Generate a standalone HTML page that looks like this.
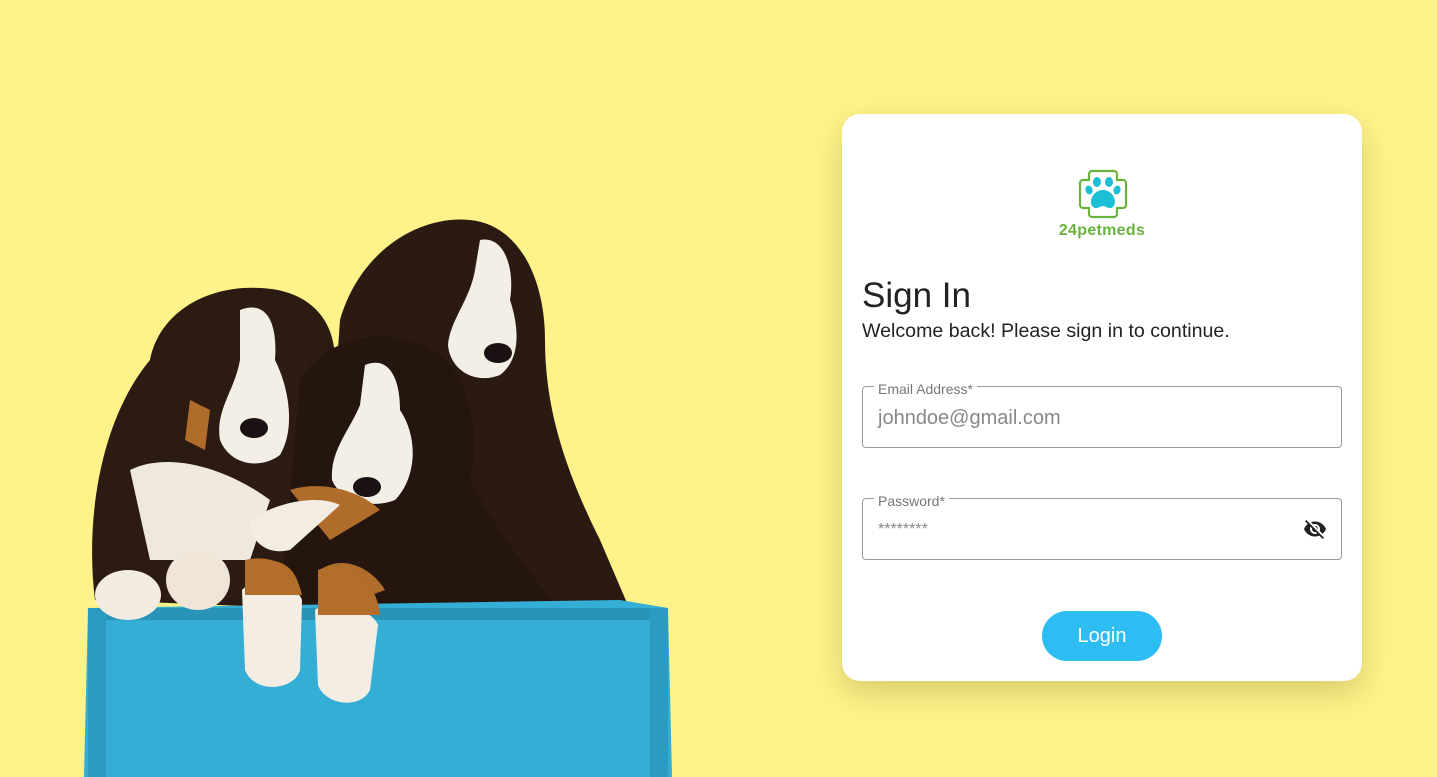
<!DOCTYPE html>
<html><head><meta charset="utf-8"><style>
*{box-sizing:border-box;margin:0;padding:0}
body{width:1437px;height:777px;background:#fef28a;font-family:"Liberation Sans",sans-serif;position:relative;overflow:hidden}
.card{position:absolute;left:842px;top:114px;width:520px;height:567px;background:#fff;border-radius:18px;box-shadow:0 12px 30px rgba(120,110,30,.28)}
h1{position:absolute;left:20px;top:162px;font-size:35px;font-weight:500;color:#222}
.sub{position:absolute;left:20px;top:206px;font-size:19.6px;color:#222}
.field{position:absolute;left:20px;width:480px;height:62px;border:1px solid #999;border-radius:4px}
.lbl{position:absolute;left:11px;top:-5px;background:#fff;padding:0 4px;font-size:14px;color:#777;line-height:14px}
.val{position:absolute;left:15px;top:20px;font-size:20px;color:#888}
.btn{position:absolute;left:200px;top:497px;width:120px;height:50px;border-radius:25px;background:#2ebdf3;color:#fff;font-size:20px;text-align:center;line-height:50px}
.logo{position:absolute;left:200px;top:55px;width:120px;text-align:center}
.logo span{display:block;font-weight:bold;color:#6ab23e;font-size:16px;margin-top:-2px;letter-spacing:0.3px}
</style></head><body>
<svg width="700" height="777" style="position:absolute;left:0;top:0">
<path d="M340,320 C360,250 420,215 470,220 C520,225 545,280 545,340 C545,400 560,460 600,540 L630,610 L320,610 Z" fill="#2a1a12"/>
<path d="M95,600 C85,520 100,420 150,360 C160,310 210,285 260,288 C310,290 335,320 335,360 L340,610 Z" fill="#2c1b12"/>
<path d="M300,380 C330,330 400,325 440,355 C470,380 480,430 470,480 C490,520 520,560 560,610 L280,610 Z" fill="#24160f"/>
<path d="M240,310 C265,300 278,320 275,360 C290,390 295,430 280,455 C260,470 230,465 220,440 C215,410 235,390 240,360 Z" fill="#f4efe6"/>
<path d="M480,240 C505,235 515,270 510,300 C520,330 520,360 500,375 C475,385 450,370 448,345 C450,320 470,300 475,270 Z" fill="#f4efe6"/>
<path d="M365,365 C390,355 400,380 400,410 C420,440 415,480 395,500 C370,510 340,500 332,480 C330,450 350,430 360,405 Z" fill="#f4efe6"/>
<path d="M130,470 C170,450 230,470 270,500 L250,560 L150,560 Z" fill="#efe8dc"/>
<path d="M190,400 l20,10 l-5,40 l-20,-10z M290,490 C320,480 360,490 380,510 L330,540 Z M320,570 C340,555 370,565 385,590 L330,610Z M245,565 C270,555 295,560 300,590 L250,610Z" fill="#b06c2a"/>
<ellipse cx="254" cy="428" rx="14" ry="10" fill="#1a1212"/>
<ellipse cx="367" cy="487" rx="14" ry="10" fill="#1a1212"/>
<ellipse cx="498" cy="353" rx="14" ry="10" fill="#1a1212"/>
<path d="M88,608 L620,600 L668,608 L672,777 L84,777 Z" fill="#35aed6"/>
<path d="M88,608 L668,608 L668,620 L88,620 Z" fill="#2a93b8"/>
<rect x="88" y="608" width="18" height="169" fill="#2c9bc2"/>
<rect x="650" y="608" width="18" height="169" fill="#2c9bc2"/>
<ellipse cx="128" cy="595" rx="33" ry="25" fill="#f1ebe0"/>
<ellipse cx="198" cy="580" rx="32" ry="30" fill="#efe6d8"/>
<path d="M242,590 C250,580 295,580 302,600 L300,670 C295,690 255,695 245,670 Z" fill="#f3ede3"/>
<path d="M315,610 C325,600 370,605 378,625 L370,690 C360,710 325,705 318,685 Z" fill="#f3ede3"/>
<path d="M245,560 C265,555 295,560 302,595 L245,595Z M318,570 C340,560 375,570 380,615 L318,615Z" fill="#b46e2c"/>
<path d="M250,520 C280,500 320,495 340,505 L290,550 C270,555 250,545 250,520Z" fill="#f2ece2"/>
</svg>
<div class="card">
 <div class="logo">
  <svg width="50" height="50" viewBox="0 0 50 50" style="margin-left:1px">
   <path d="M14,2 h22 a3,3 0 0 1 3,3 v6 h6 a3,3 0 0 1 3,3 v22 a3,3 0 0 1 -3,3 h-6 v6 a3,3 0 0 1 -3,3 h-22 a3,3 0 0 1 -3,-3 v-6 h-6 a3,3 0 0 1 -3,-3 v-22 a3,3 0 0 1 3,-3 h6 v-6 a3,3 0 0 1 3,-3z" fill="none" stroke="#6ab23e" stroke-width="2.2"/>
   <ellipse cx="19" cy="13" rx="4" ry="5" fill="#1bbfd6"/>
   <ellipse cx="31" cy="13" rx="4" ry="5" fill="#1bbfd6"/>
   <ellipse cx="11" cy="21" rx="3.5" ry="4.5" fill="#1bbfd6" transform="rotate(-20 11 21)"/>
   <ellipse cx="39" cy="21" rx="3.5" ry="4.5" fill="#1bbfd6" transform="rotate(20 39 21)"/>
   <path d="M25,21 C35,21 40,33 35,38 C31,41 28,37 25,37 C22,37 19,41 15,38 C10,33 15,21 25,21z" fill="#1bbfd6"/>
  </svg>
  <span>24petmeds</span>
 </div>
 <h1>Sign In</h1>
 <div class="sub">Welcome back! Please sign in to continue.</div>
 <div class="field" style="top:272px"><div class="lbl">Email Address*</div><div class="val">johndoe@gmail.com</div></div>
 <div class="field" style="top:384px"><div class="lbl">Password*</div><div class="val" style="font-size:16px;top:22px">********</div>
  <svg style="position:absolute;right:14px;top:18px" width="24" height="24" viewBox="0 0 24 24"><path fill="#222" d="M12 7c2.76 0 5 2.24 5 5 0 .65-.13 1.26-.36 1.83l2.92 2.92c1.51-1.26 2.7-2.89 3.430-4.75-1.73-4.39-6-7.5-11-7.5-1.4 0-2.74.25-3.98.7l2.16 2.16C10.74 7.130 11.35 7 12 7zM2 4.27l2.28 2.28.46.46C3.08 8.3 1.78 10.02 1 12c1.73 4.39 6 7.5 11 7.5 1.55 0 3.03-.3 4.38-.84l.42.42L19.73 22 21 20.73 3.27 3 2 4.27zM7.53 9.8l1.55 1.55c-.05.21-.08.43-.08.65 0 1.66 1.34 3 3 3 .22 0 .44-.03.65-.08l1.55 1.55c-.67.33-1.41.53-2.2.53-2.76 0-5-2.24-5-5 0-.79.2-1.53.53-2.2zm4.31-.78l3.15 3.15.02-.16c0-1.66-1.34-3-3-3l-.17.01z"/></svg>
 </div>
 <div class="btn">Login</div>
</div>
</body></html>
